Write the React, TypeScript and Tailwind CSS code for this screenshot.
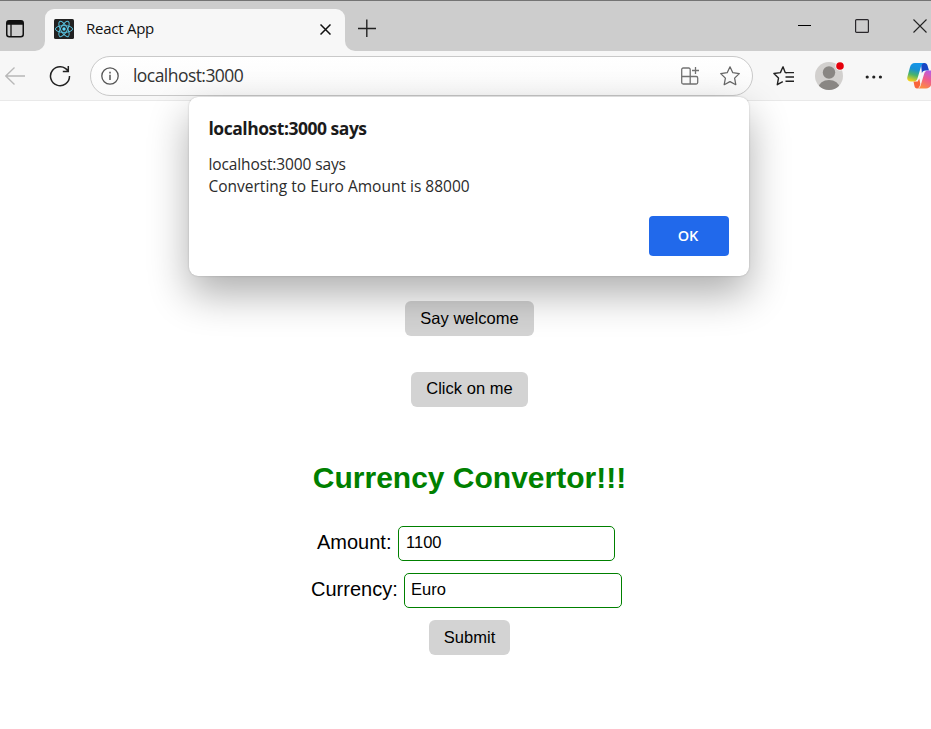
import type { ReactNode } from "react";

const uiFont = "font-['Open_Sans','Noto_Sans',sans-serif]";

function TabsIcon() {
  return (
    <svg width="18" height="18" viewBox="0 0 18 18" fill="none" stroke="#111" strokeWidth="1.5" className="block">
      <rect x="0.75" y="0.75" width="16.5" height="16" rx="2.5" />
      <path d="M1 3.3h16M1.500 2.200h15" strokeWidth="2.8" />
      <path d="M5 4v12.5" strokeWidth="1.3" />
    </svg>
  );
}

function ReactLogo() {
  return (
    <svg width="20" height="20" viewBox="0 0 20 20" className="block">
      <rect width="20" height="20" rx="1.5" fill="#222222" />
      <g fill="none" stroke="#58bfdb" strokeWidth="1">
        <ellipse cx="10" cy="10" rx="8.6" ry="3.4" />
        <ellipse cx="10" cy="10" rx="8.6" ry="3.4" transform="rotate(60 10 10)" />
        <ellipse cx="10" cy="10" rx="8.6" ry="3.4" transform="rotate(120 10 10)" />
      </g>
      <circle cx="10" cy="10" r="1.7" fill="#61dafb" />
    </svg>
  );
}

function CopilotLogo() {
  return (
    <svg width="28" height="26" viewBox="0 0 28 26" className="block shrink-0">
      <defs>
        <linearGradient id="cool" x1="0.6" y1="0" x2="0.35" y2="1">
          <stop offset="0" stopColor="#1496ea" />
          <stop offset="0.35" stopColor="#1790d6" />
          <stop offset="0.65" stopColor="#48b36c" />
          <stop offset="1" stopColor="#f4d21b" />
        </linearGradient>
        <linearGradient id="warm" x1="0.7" y1="0" x2="0.2" y2="1">
          <stop offset="0" stopColor="#b45be8" />
          <stop offset="0.45" stopColor="#f05c8c" />
          <stop offset="0.9" stopColor="#fb8a45" />
        </linearGradient>
      </defs>
      <path d="M14 0h3.500c1.700 0 2.500 1.100 3 2.600l1.500 4.900h-3.500c-2 0-3 .8-3.600 2.700z" fill="#1746c4" />
      <path d="M21 7.500h3c3 0 4 1.800 3 5l-2.500 8.500c-.9 3-2.500 4.500-5.500 4.500h-9c2 0 3-1 3.700-3.300l3.300-11c.7-2.400 1.700-3.700 4-3.700z" fill="url(#warm)" />
      <path d="M6.500 18.500h4.200l1.600-3 1 5.500c-.7 2.800-1.500 4.500-3.300 4.500-1.500 0-2.200-1-2.600-2.700z" fill="#f9653a" />
      <path d="M8 0h9c-1.700.3-2.400 1.600-3 3.600l-3.300 11.200c-.8 2.600-1.700 3.700-4 3.700H4c-3.200 0-4.400-1.800-3.500-5l2.400-9C3.700 1.600 5 0 8 0z" fill="url(#cool)" />
    </svg>
  );
}

function TitleBar() {
  return (
    <header className="flex h-[51px] items-start border-t border-[#747474] bg-[#cdcdcd]">
      <div className="flex h-[50px] w-[45px] shrink-0 bg-[#f7f7f7]">
        <div className="h-[50px] w-[45px] rounded-br-[10px] bg-[#cdcdcd] pl-[6px] pt-[19px]">
          <TabsIcon />
        </div>
      </div>
      <div className="h-[50px] w-[300px] shrink-0 pt-[8px]">
        <div className="flex h-[42px] items-center rounded-t-[9px] bg-[#f7f7f7] pb-[2px] pl-[9px] pr-[14px]">
          <ReactLogo />
          <span className={`${uiFont} ml-[12px] whitespace-nowrap pb-[2px] text-[15px] tracking-[-0.250px] text-[#111]`}>React App</span>
          <svg width="11" height="11" viewBox="0 0 11 11" stroke="#111" strokeWidth="1.500" className="ml-auto block">
            <path d="M.5.5l10 10M10.500.5l-10 10" />
          </svg>
        </div>
      </div>
      <div className="h-[50px] grow bg-[#f7f7f7]">
        <div className="flex h-[50px] items-start rounded-bl-[10px] bg-[#cdcdcd] pl-[13px]">
          <svg width="18" height="18" viewBox="0 0 18 18" stroke="#222" strokeWidth="1.400" className="mt-[18px] block shrink-0">
            <path d="M0 9.500h18M8.800.5v18" />
          </svg>
          <svg width="13" height="1" viewBox="0 0 13 1" className="ml-[422px] mt-[24px] block shrink-0">
            <path d="M0 .5h13" stroke="#000" />
          </svg>
          <svg width="14" height="14" viewBox="0 0 14 14" fill="none" stroke="#29272b" strokeWidth="1.200" className="ml-[44px] mt-[18px] block shrink-0">
            <rect x="0.600" y="0.600" width="12.800" height="12.800" rx="1" />
          </svg>
          <svg width="14" height="14" viewBox="0 0 14 14" stroke="#222" strokeWidth="1.100" className="ml-[44px] mt-[18px] block shrink-0">
            <path d="M.5.500l13 13M13.500.5l-13 13" />
          </svg>
        </div>
      </div>
    </header>
  );
}

function ToolBar() {
  return (
    <div className="flex h-[50px] items-center border-b border-[#e9e9e9] bg-[#f7f7f7]">
      <svg width="20" height="18" viewBox="0 0 20 18" fill="none" stroke="#b8b8b8" strokeWidth="1.300" className="ml-[5px] block shrink-0">
        <path d="M20 9H1M9.500.5L.8 9l8.700 8.500" />
      </svg>
      <svg width="22" height="22" viewBox="0 0 22 22" fill="none" stroke="#222" strokeWidth="1.500" className="ml-[24px] block shrink-0">
        <path d="M19.100 6.200A9.500 9.500 0 1 0 20.500 11M19.300 1v5.500h-5.500" />
      </svg>
      <div className="ml-[19px] mt-px flex h-[40px] w-[663px] shrink-0 items-center rounded-full border border-[#c9c9c9] bg-linear-to-b from-white to-[#fafafa] pl-[10px] pr-[12px]">
        <svg width="18" height="18" viewBox="0 0 18 18" fill="none" stroke="#555" strokeWidth="1.300" className="block shrink-0">
          <circle cx="9" cy="9" r="8.200" />
          <path d="M9 7.800v5.200M9 4.800v1.600" strokeWidth="1.500" />
        </svg>
        <span className={`${uiFont} ml-[14px] whitespace-nowrap pb-[2px] text-[17.500px] tracking-[-0.550px] text-[#333]`}>localhost:3000</span>
        <svg width="18" height="18" viewBox="0 0 18 18" fill="none" stroke="#737373" strokeWidth="1.300" className="ml-auto block shrink-0">
          <path d="M9.200 9.500V2.500A1.500 1.500 0 0 0 7.700 1H2.200A1.500 1.500 0 0 0 .7 2.500v13A1.500 1.500 0 0 0 2.200 17h13a1.500 1.500 0 0 0 1.500-1.500V11a1.500 1.500 0 0 0-1.500-1.500H.7M9.200 9.500V17M14.500 0v7M11 3.500h7" />
        </svg>
        <svg width="20" height="20" viewBox="0 0 20 20" fill="none" stroke="#666" strokeWidth="1.250" strokeLinejoin="round" className="ml-[21px] block shrink-0">
          <path d="M10 .8l2.800 5.900 6.500.9-4.700 4.500 1.200 6.600-5.800-3.100-5.800 3.100 1.200-6.600L.7 7.600l6.500-.9z" />
        </svg>
      </div>
      <svg width="22" height="20" viewBox="0 0 22 20" fill="none" stroke="#222" strokeWidth="1.400" strokeLinejoin="round" className="ml-[20px] block shrink-0">
        <path d="M14 6.700l-1.800-.2L10 .8 7.400 6.600.9 7.500l4.600 4.600-1.200 6.600 5.500-3M12.800 6.600H21M12.500 11H21M12.500 15.300H21" />
      </svg>
      <svg width="30" height="30" viewBox="0 0 30 30" className="ml-[20px] block shrink-0">
        <defs>
          <clipPath id="avatar"><circle cx="14" cy="15" r="14" /></clipPath>
        </defs>
        <circle cx="14" cy="15" r="14" fill="#d2d0ce" />
        <g clipPath="url(#avatar)" fill="#898683">
          <circle cx="14" cy="11.500" r="6.200" />
          <ellipse cx="14" cy="27" rx="10.500" ry="8" />
        </g>
        <circle cx="25" cy="5" r="4.700" fill="#f7f7f7" />
        <circle cx="25" cy="5" r="3.800" fill="#e5000b" />
      </svg>
      <svg width="18" height="4" viewBox="0 0 18 4" fill="#222" className="ml-[20px] mt-[2px] block shrink-0">
        <circle cx="2.200" cy="2" r="1.600" /><circle cx="8.800" cy="2" r="1.600" /><circle cx="15.400" cy="2" r="1.600" />
      </svg>
      <div className="ml-[24px] w-[24px] overflow-hidden"><CopilotLogo /></div>
    </div>
  );
}

function AlertDialog() {
  return (
    <div className={`${uiFont} absolute left-[188.500px] top-[97px] flex h-[179px] w-[560px] flex-col rounded-[9px] bg-white pb-[20px] pl-[20px] pr-[19.500px] pt-[18px] shadow-[0_0_2px_rgba(0,0,0,0.22),0_18px_40px_rgba(0,0,0,0.32)]`}>
      <h2 className="whitespace-nowrap text-[17.500px] font-bold leading-[26px] tracking-[-0.480px] text-[#1b1b1b]">localhost:3000 says</h2>
      <p className="mt-[12px] whitespace-nowrap text-[15.500px] leading-[22px] text-[#2b2b2b]">
        <span className="block tracking-[-0.120px]">localhost:3000 says</span>
        <span className="block">Converting to Euro Amount is 88000</span>
      </p>
      <button className="mt-auto h-[40px] w-[80px] self-end rounded-[4px] bg-[#2169eb] pr-[2px] text-[14.500px] font-semibold text-white">OK</button>
    </div>
  );
}

function GrayButton({ className, children }: { className: string; children: ReactNode }) {
  return (
    <button className={`${className} h-[35px] rounded-[6px] bg-[#d3d3d3] text-[16.500px] tracking-[0.040px] text-black`}>{children}</button>
  );
}

export default function App() {
  return (
    <div className="relative h-[729px] w-[931px] overflow-hidden bg-white">
      <TitleBar />
      <ToolBar />
      <main className="flex flex-col items-center pl-[8px] pt-[200px] font-['Liberation_Sans',Arial,sans-serif] text-black">
        <GrayButton className="w-[129px]">Say welcome</GrayButton>
        <GrayButton className="mt-[36px] w-[117px] pb-[2px]">Click on me</GrayButton>
        <h1 className="mt-[53px] whitespace-nowrap text-[30px] font-bold leading-[36px] text-[#008000]">Currency Convertor!!!</h1>
        <form className="flex flex-col items-center">
          <div className="mr-[7px] mt-[30px] flex h-[35px] w-[298px] items-center justify-between">
            <label className="relative -top-[2px] whitespace-nowrap text-[20px]">Amount:</label>
            <input className="h-[35px] w-[217px] rounded-[5px] border border-[#008000] px-[7px] pb-[2px] text-[16.500px] outline-none" defaultValue="1100" />
          </div>
          <div className="mr-[6px] mt-[12px] flex h-[35px] w-[311px] items-center justify-between">
            <label className="relative -top-[2px] whitespace-nowrap text-[20px]">Currency:</label>
            <input className="h-[35px] w-[218px] rounded-[5px] border border-[#008000] px-[6px] pb-[2px] text-[16.500px] outline-none" defaultValue="Euro" />
          </div>
          <GrayButton className="mt-[12px] w-[81px]">Submit</GrayButton>
        </form>
      </main>
      <AlertDialog />
    </div>
  );
}
